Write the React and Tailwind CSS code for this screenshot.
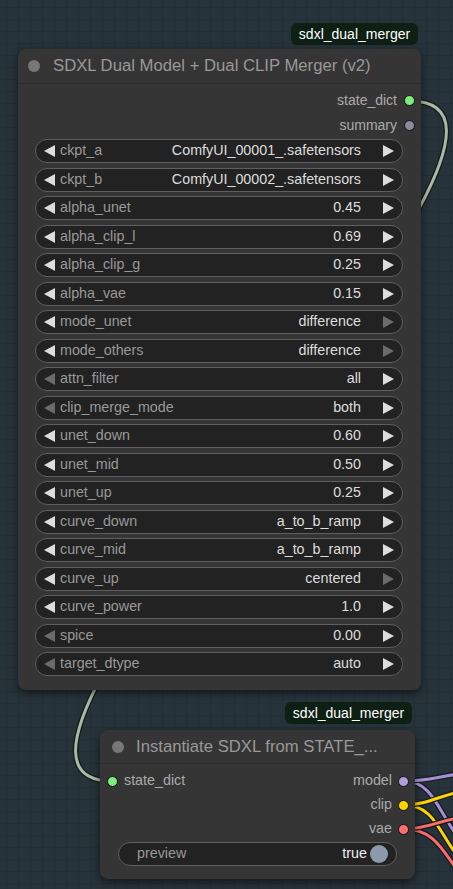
import React from 'react';

const FONT = { fontFamily: '"Liberation Sans", Arial, sans-serif' };

const WIDGETS = [
  { label: 'ckpt_a', value: 'ComfyUI_00001_.safetensors' },
  { label: 'ckpt_b', value: 'ComfyUI_00002_.safetensors' },
  { label: 'alpha_unet', value: '0.45' },
  { label: 'alpha_clip_l', value: '0.69' },
  { label: 'alpha_clip_g', value: '0.25' },
  { label: 'alpha_vae', value: '0.15' },
  { label: 'mode_unet', value: 'difference', rightDim: true },
  { label: 'mode_others', value: 'difference', rightDim: true },
  { label: 'attn_filter', value: 'all', leftDim: true },
  { label: 'clip_merge_mode', value: 'both', leftDim: true },
  { label: 'unet_down', value: '0.60' },
  { label: 'unet_mid', value: '0.50' },
  { label: 'unet_up', value: '0.25' },
  { label: 'curve_down', value: 'a_to_b_ramp' },
  { label: 'curve_mid', value: 'a_to_b_ramp' },
  { label: 'curve_up', value: 'centered', rightDim: true },
  { label: 'curve_power', value: '1.0' },
  { label: 'spice', value: '0.00', leftDim: true },
  { label: 'target_dtype', value: 'auto', leftDim: true },
];

function Arrow({ dir, dim }) {
  return (
    <svg width="11" height="12" viewBox="0 0 11 12" className="shrink-0">
      <polygon
        points={dir === 'left' ? '11,0 11,12 0,6' : '0,0 0,12 11,6'}
        fill={dim ? '#6b6b6b' : '#dddddd'}
      />
    </svg>
  );
}

function Widget({ label, value, leftDim, rightDim }) {
  return (
    <div className="h-[24px] w-[368px] rounded-full border border-[#5f5f5f] bg-[#222222] flex items-center pl-[8px] pr-[8px] text-[14.3px]">
      <Arrow dir="left" dim={leftDim} />
      <span className="ml-[5px] text-[#999999] flex-1 truncate">{label}</span>
      <span className="text-[#dddddd] mr-[22px]">{value}</span>
      <Arrow dir="right" dim={rightDim} />
    </div>
  );
}

function Dot({ color }) {
  return <span className={`w-[11px] h-[11px] rounded-full border border-[#111] shrink-0 ${color}`} />;
}

function Badge({ className }) {
  return (
    <div className={`absolute h-[22px] w-[127px] rounded-[6px] bg-[#0e1f13] text-white text-[14px] flex items-center justify-center ${className}`}>
      sdxl_dual_merger
    </div>
  );
}

function Grid() {
  return (
    <svg className="absolute inset-0" width="453" height="889">
      <defs>
        <pattern id="g" x="6" y="7" width="12" height="12" patternUnits="userSpaceOnUse">
          <path d="M0 0H12M0 0V12" stroke="#1f2a30" strokeWidth="1.2" fill="none" />
        </pattern>
      </defs>
      <rect width="453" height="889" fill="#27333a" />
      <rect width="453" height="889" fill="url(#g)" />
    </svg>
  );
}

function Wire({ d, color }) {
  return (
    <g fill="none" strokeLinecap="round">
      <path d={d} stroke="#151a1c" strokeWidth="5.5" />
      <path d={d} stroke={color} strokeWidth="3" />
    </g>
  );
}

function Wires() {
  return (
    <svg className="absolute inset-0" width="453" height="889">
      <Wire d="M410 101 C610 101 -88 781 112 781" color="#a7b9a4" />
      <Wire d="M404 781 C440 781 440 830 475 852" color="#a48fd6" />
      <Wire d="M404 781 C428 781 440 776 460 774" color="#a48fd6" />
      <Wire d="M404 805 C440 805 440 845 470 868" color="#ffd400" />
      <Wire d="M404 805 C428 805 440 795 460 792" color="#ffd400" />
      <Wire d="M404 829 C440 829 445 860 470 885" color="#ff6b6b" />
      <Wire d="M404 829 C428 829 440 820 460 818" color="#ff6b6b" />
    </svg>
  );
}

export default function App() {
  return (
    <div className="relative w-[453px] h-[889px] overflow-hidden" style={FONT}>
      <Grid />
      <Wires />

      <Badge className="left-[291px] top-[23px]" />
      <div className="absolute left-[18px] top-[49px] w-[403px] h-[641px] rounded-[8px] bg-[#353535] shadow-[0_3px_8px_rgba(0,0,0,0.55)] flex flex-col">
        <div className="h-[35px] flex items-center border-b border-[#2c2c2c] shrink-0">
          <span className="ml-[10px] w-[12px] h-[12px] rounded-full bg-[#777777]" />
          <span className="ml-[13px] text-[16.7px] text-[#999999]">SDXL Dual Model + Dual CLIP Merger (v2)</span>
        </div>
        <div className="pt-[4px] flex flex-col">
          <div className="h-[25px] flex items-center justify-end pr-[6px] gap-[7px] text-[14px] text-[#aaaaaa]">
            state_dict <Dot color="bg-[#7bed7b]" />
          </div>
          <div className="h-[25px] flex items-center justify-end pr-[6px] gap-[7px] text-[14px] text-[#aaaaaa]">
            summary <Dot color="bg-[#8a8a9c]" />
          </div>
        </div>
        <div className="mt-[1px] pl-[17px] flex flex-col gap-[4.5px]">
          {WIDGETS.map((w) => (
            <Widget key={w.label} {...w} />
          ))}
        </div>
      </div>

      <Badge className="left-[285px] top-[702px]" />
      <div className="absolute left-[100px] top-[730px] w-[315px] h-[149px] rounded-[8px] bg-[#353535] shadow-[0_3px_8px_rgba(0,0,0,0.55)] flex flex-col">
        <div className="h-[34px] flex items-center border-b border-[#2c2c2c] shrink-0">
          <span className="ml-[12px] w-[12px] h-[12px] rounded-full bg-[#777777]" />
          <span className="ml-[12px] text-[16.7px] text-[#999999]">Instantiate SDXL from STATE_...</span>
        </div>
        <div className="pt-[5px] flex flex-col text-[14.3px] text-[#aaaaaa]">
          <div className="h-[24px] flex items-center">
            <span className="ml-[7px]"><Dot color="bg-[#7bed7b] block" /></span>
            <span className="ml-[6px] flex-1">state_dict</span>
            <span className="mr-[6px]">model</span>
            <span className="mr-[6px]"><Dot color="bg-[#b39ddb] block" /></span>
          </div>
          <div className="h-[24px] flex items-center justify-end pr-[6px] gap-[6px]">
            clip <Dot color="bg-[#ffd500]" />
          </div>
          <div className="h-[24px] flex items-center justify-end pr-[6px] gap-[6px]">
            vae <Dot color="bg-[#ff6e6e]" />
          </div>
        </div>
        <div className="mt-[1px] ml-[18px] w-[279px] h-[24px] rounded-full border border-[#5f5f5f] bg-[#222222] flex items-center pl-[18px] pr-[8px] text-[14.3px]">
          <span className="flex-1 text-[#999999]">preview</span>
          <span className="text-[#eeeeee]">true</span>
          <span className="ml-[3px] w-[18px] h-[18px] rounded-full bg-[#8b9bab]" />
        </div>
      </div>
    </div>
  );
}
